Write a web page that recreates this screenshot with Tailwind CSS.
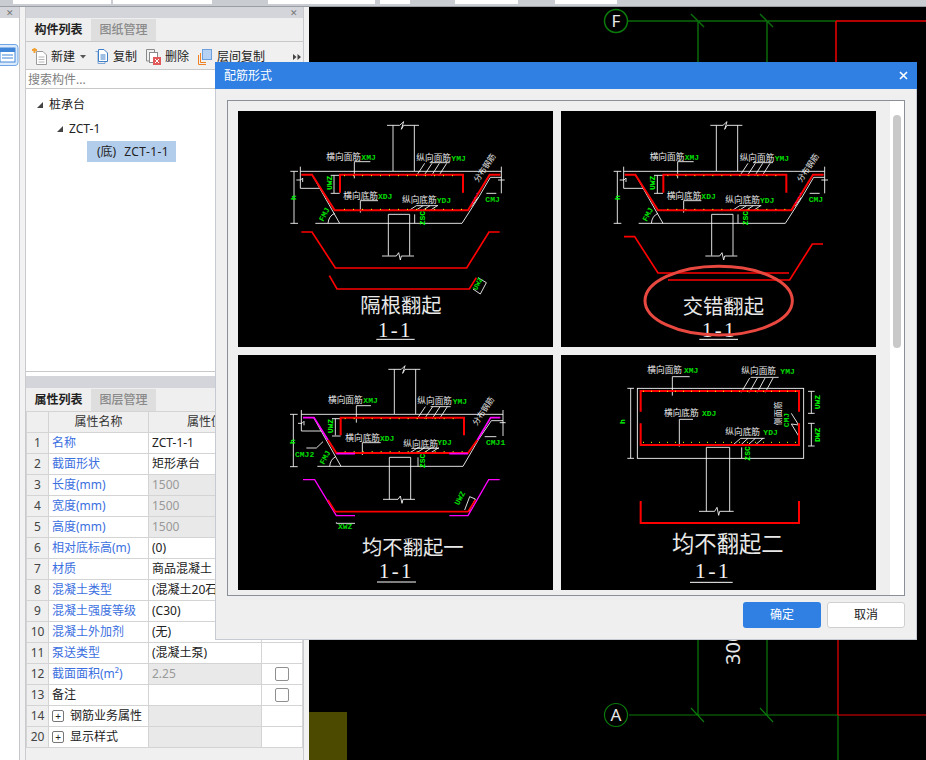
<!DOCTYPE html>
<html lang="zh-CN">

<head>
    <meta charset="UTF-8" />
    <title>配筋形式</title>
    <script src="https://cdn.jsdelivr.net/npm/@tailwindcss/browser@4"></script>
</head>

<body class="bg-white">
    <div class="relative w-[926px] h-[760px] overflow-hidden flex flex-col text-[12px] text-[#222] font-['Noto_Sans','Noto_Sans_CJK_SC',sans-serif]">

        <!-- top toolbar remnants -->
        <div class="h-[7px] shrink-0 bg-[#c9ccd1] border-b border-[#9a9da3] flex items-start">
            <div class="w-[13px]"></div>
            <div class="w-[98px] h-[4px] bg-white"></div>
            <div class="w-[2px]"></div>
            <div class="w-[99px] h-[4px] bg-white"></div>
            <div class="w-[56px]"></div>
            <div class="w-[107px] h-[4px] bg-white"></div>
            <div class="w-[5px]"></div>
            <div class="w-[30px] h-[4px] bg-white"></div>
            <div class="w-[45px]"></div>
            <div class="w-[63px] h-[4px] bg-white"></div>
            <div class="w-[37px]"></div>
            <div class="w-[62px] h-[4px] bg-white"></div>
        </div>

        <div class="flex flex-1 min-h-0">
            <!-- collapsed left panel -->
            <div class="w-[20px] shrink-0 border-r border-[#c4c6ca] bg-white flex flex-col">
                <div class="h-[11px] bg-[#d3d5da] flex items-center justify-end pr-[5px] text-[#777] text-[9px] leading-none">✕</div>
                <div class="pt-[26px]">
                    <svg width="19" height="23" viewBox="0 0 19 23">
                        <rect x="-4" y="0.5" width="22" height="21" rx="3" fill="#dcebfb" stroke="#6ea5e6" />
                        <rect x="0" y="4" width="15" height="14" fill="#fff" stroke="#3f86d8" />
                        <rect x="0" y="4" width="15" height="4" fill="#3f86d8" />
                        <path d="M2 11H13M2 14H13" stroke="#3f86d8" />
                    </svg>
                </div>
            </div>
            <div class="w-[5px] shrink-0 bg-[#f2f2f2]"></div>

            <!-- component panels -->
            <div class="w-[279px] shrink-0 flex flex-col border-x border-[#c8cacd] bg-white">
                <div class="h-[11px] shrink-0 bg-[#d3d5da] flex items-center justify-end pr-[5px] text-[#777] text-[9px] leading-none">✕</div>
                <div class="h-[24px] shrink-0 bg-[#efefef] flex items-stretch border-b border-[#c8c8c8] pt-[1px]">
                    <div class="w-[65px] flex items-center justify-center font-bold">构件列表</div>
                    <div class="w-[65px] flex items-center justify-center bg-[#dedede] text-[#8a8a8a] font-medium">图纸管理</div>
                </div>
                <div class="h-[28px] shrink-0 bg-[#f0f0f0] border-b border-[#c8c8c8] flex items-center pt-[2px]">
                    <svg class="ml-[6px]" width="16" height="17" viewBox="0 0 16 17">
                        <path d="M4.5 3.5H11L14.5 7V16.5H4.5Z" fill="#fff" stroke="#9a9a9a" />
                        <path d="M6.5 9H12.5M6.5 11.5H12.5M6.5 14H12.5" stroke="#b5b5b5" />
                        <path d="M0 2H5M2.5 0V5" stroke="#f0a030" stroke-width="2" />
                    </svg>
                    <span class="ml-[3px]">新建</span>
                    <svg class="ml-[5px]" width="6" height="4" viewBox="0 0 6 4"><path d="M0 0H6L3 3.5Z" fill="#555" /></svg>
                    <svg class="ml-[9px]" width="13" height="15" viewBox="0 0 13 15">
                        <path d="M0.5 2.5H3V14.5H10V12.5" fill="none" stroke="#7fa6d6" />
                        <path d="M3.5 0.5H9L12.5 4V12.5H3.5Z" fill="#fff" stroke="#3f7fc8" />
                        <path d="M5.5 6H10.5M5.5 8H10.5M5.5 10H10.5" stroke="#3f7fc8" />
                    </svg>
                    <span class="ml-[5px]">复制</span>
                    <svg class="ml-[9px]" width="15" height="16" viewBox="0 0 15 16">
                        <path d="M0.5 0.5H8.5V3M0.5 0.5V12H3" fill="none" stroke="#8a8a8a" />
                        <rect x="3.5" y="3.5" width="8" height="10" fill="#fff" stroke="#8a8a8a" />
                        <rect x="7" y="8" width="8" height="8" fill="#e05a5a" />
                        <path d="M9 10L13 14M13 10L9 14" stroke="#fff" />
                    </svg>
                    <span class="ml-[4px]">删除</span>
                    <svg class="ml-[9px]" width="14" height="16" viewBox="0 0 14 16">
                        <path d="M0.5 6V15.5H8" fill="none" stroke="#f08020" />
                        <path d="M2.5 4V13.5H8" fill="none" stroke="#f08020" />
                        <rect x="4.5" y="0.5" width="9" height="10" fill="#b5d2f5" stroke="#6ea0dc" />
                    </svg>
                    <span class="ml-[5px]">层间复制</span>
                    <svg class="ml-auto mr-[2px]" width="8" height="6" viewBox="0 0 8 6"><path d="M0 0L3.5 3L0 6ZM4.5 0L8 3L4.5 6Z" fill="#444" /></svg>
                </div>
                <div class="h-[19px] shrink-0 border-b border-[#c8c8c8] px-[2px] flex items-center text-[#808080] pt-[2px]">搜索构件...</div>
                <div class="h-[282px] shrink-0 pt-[3px] text-[#222]">
                    <div class="h-[24px] pl-[11px] flex items-center gap-[6px] pt-[1px]">
                        <svg width="6" height="6" viewBox="0 0 6 6"><path d="M6 0V6H0Z" fill="#444" /></svg>
                        <span>桩承台</span>
                    </div>
                    <div class="h-[24px] pl-[31px] flex items-center gap-[6px] pt-[1px]">
                        <svg width="6" height="6" viewBox="0 0 6 6"><path d="M6 0V6H0Z" fill="#444" /></svg>
                        <span>ZCT-1</span>
                    </div>
                    <div class="h-[21px] w-[89px] mt-[1px] ml-[61px] pl-[10px] bg-[#b2cdec] flex items-center"><span>(底)</span><span class="ml-[8px] tracking-[0.4px]">ZCT-1-1</span></div>
                </div>
                <div class="h-[5px] shrink-0 bg-white border-t border-[#c8c8c8]"></div>
                <div class="h-[12px] shrink-0 bg-[#d3d5da]"></div>
                <div class="h-[23px] shrink-0 bg-[#efefef] flex items-stretch pt-[1px]">
                    <div class="w-[65px] flex items-center justify-center font-bold">属性列表</div>
                    <div class="w-[65px] flex items-center justify-center bg-[#dedede] text-[#8a8a8a] font-medium">图层管理</div>
                </div>
                <table class="table-fixed border-collapse w-[277px] shrink-0 [&_td]:border [&_td]:border-[#d4d4d4] [&_td]:h-[21px] [&_td]:p-0 [&_th]:border [&_th]:border-[#d4d4d4] [&_th]:font-normal">
                    <colgroup>
                        <col class="w-[22px]" />
                        <col class="w-[100px]" />
                        <col class="w-[113px]" />
                        <col class="w-[41px]" />
                    </colgroup>
                    <thead>
                        <tr class="h-[21px] bg-[#efefef] text-[#333]">
                            <th></th>
                            <th>属性名称</th>
                            <th class="text-center">属性值</th>
                            <th>附加</th>
                        </tr>
                    </thead>
                    <tbody class="[&_td:first-child]:bg-[#efefef] [&_td:first-child]:text-center [&_td:first-child]:text-[#444] [&_td:nth-child(2)]:pl-[3px] [&_td:nth-child(3)]:pl-[3px]">
                        <tr><td>1</td><td class="text-[#3b6fe0]">名称</td><td>ZCT-1-1</td><td></td></tr>
                        <tr><td>2</td><td class="text-[#3b6fe0]">截面形状</td><td>矩形承台</td><td></td></tr>
                        <tr><td>3</td><td class="text-[#3b6fe0]">长度(mm)</td><td class="bg-[#e9e9e9] text-[#999]">1500</td><td></td></tr>
                        <tr><td>4</td><td class="text-[#3b6fe0]">宽度(mm)</td><td class="bg-[#e9e9e9] text-[#999]">1500</td><td></td></tr>
                        <tr><td>5</td><td class="text-[#3b6fe0]">高度(mm)</td><td class="bg-[#e9e9e9] text-[#999]">1500</td><td></td></tr>
                        <tr><td>6</td><td class="text-[#3b6fe0]">相对底标高(m)</td><td>(0)</td><td></td></tr>
                        <tr><td>7</td><td class="text-[#3b6fe0]">材质</td><td>商品混凝土</td><td></td></tr>
                        <tr><td>8</td><td class="text-[#3b6fe0]">混凝土类型</td><td class="whitespace-nowrap overflow-hidden">(混凝土20石)</td><td></td></tr>
                        <tr><td>9</td><td class="text-[#3b6fe0]">混凝土强度等级</td><td>(C30)</td><td></td></tr>
                        <tr><td>10</td><td class="text-[#3b6fe0]">混凝土外加剂</td><td>(无)</td><td></td></tr>
                        <tr><td>11</td><td class="text-[#3b6fe0]">泵送类型</td><td>(混凝土泵)</td><td></td></tr>
                        <tr>
                            <td>12</td><td class="text-[#3b6fe0]">截面面积(m²)</td><td class="bg-[#e9e9e9] text-[#999]">2.25</td>
                            <td><div class="w-[14px] h-[14px] mx-auto rounded-[2px] border border-[#8f8f8f] bg-white"></div></td>
                        </tr>
                        <tr>
                            <td>13</td><td>备注</td><td></td>
                            <td><div class="w-[14px] h-[14px] mx-auto rounded-[2px] border border-[#8f8f8f] bg-white"></div></td>
                        </tr>
                        <tr>
                            <td>14</td>
                            <td><div class="flex items-center gap-[6px]"><span class="w-[12px] h-[12px] rounded-[2px] border border-[#777] flex items-center justify-center text-[10px] leading-none">+</span>钢筋业务属性</div></td>
                            <td class="bg-[#e9e9e9]"></td><td></td>
                        </tr>
                        <tr>
                            <td>20</td>
                            <td><div class="flex items-center gap-[6px]"><span class="w-[12px] h-[12px] rounded-[2px] border border-[#777] flex items-center justify-center text-[10px] leading-none">+</span>显示样式</div></td>
                            <td class="bg-[#e9e9e9]"></td><td></td>
                        </tr>
                    </tbody>
                </table>
                <div class="flex-1 bg-[#f0f0f0]"></div>
            </div>
            <div class="w-[5px] shrink-0 bg-[#f2f2f2]"></div>

            <!-- drawing canvas -->
            <div class="flex-1 bg-black">
                <svg class="block" width="617" height="753" viewBox="309 7 617 753" fill="none">
                    <rect x="309" y="712" width="38" height="48" fill="#4b4a00" />
                    <path d="M628 21H836M698 21V640M767 21V640M691 14L704 27M760 14L773 27" stroke="#0a6a0a" stroke-width="1.5" />
                    <path d="M836 21H926M836 21V640" stroke="#f00000" stroke-width="1.5" />
                    <circle cx="616" cy="21" r="11.5" stroke="#0a7a0a" stroke-width="1.5" />
                    <text x="616" y="27" text-anchor="middle" font-size="17" fill="#e8e8e8">F</text>
                    <path d="M629 715H838M698 640V715M767 640V715M838 715V760M691 708L704 722M760 708L773 722" stroke="#0a7a0a" stroke-width="1.2" />
                    <path d="M838 715H926" stroke="#f00000" stroke-width="1.2" />
                    <path d="M838 640V715" stroke="#f00000" stroke-width="1.2" />
                    <circle cx="616" cy="715" r="11.5" stroke="#0a7a0a" stroke-width="1.2" />
                    <text x="616" y="721" text-anchor="middle" font-size="17" fill="#e8e8e8">A</text>
                    <text transform="translate(740 665) rotate(-90)" font-size="20" fill="#e8e8e8">3000</text>
                </svg>
            </div>
        </div>

        <!-- shared drawing for the two raised foundations -->
        <svg class="absolute w-0 h-0">
            <defs>
                <g id="zct-top">
                    <path fill="none" stroke="#fff" stroke-width="2.6" d="M465 183V46M529 183V46M447 46H485L497 35L490 58L497 46H543M187 184H790M168 184V340M157 184H180M157 340H180M187 170V235H248M175 210H188L194 204V216M222 194L305 340M232 340H672L720 265M757 202L720 265M757 202H790M790 170V250M745 250H775M780 210H800M288 196V250M278 196H305M278 250H305M451 437V313H515V437M432 438H475L482 428L487 450L490 438H528M270 340Q272 318 290 310M530 313V340M349 205V155H397M367 308V272H420M575 158H635M535 198L560 160M557 198L582 160M580 198L604 160M602 198L626 160M535 287H600M512 302L535 287M532 302L555 287M553 302L576 287M575 302L598 287M700 290L720 262" />
                    <path fill="none" stroke="#ff0000" stroke-width="6" d="M190 194H222L290 301H690L755 194H787M306 248V194H675V248" />
                    <path fill="none" stroke="#ffff00" stroke-width="3" stroke-dasharray="3 24" d="M318 197H665M318 298H680" />
                    <path fill="none" stroke="#ff00ff" stroke-width="3" stroke-dasharray="3 12" d="M703 278L722 240" />
                    <g font-size="26" fill="#e8e8e8">
                        <text x="265" y="150">横向面筋</text>
                        <text x="535" y="152">纵向面筋</text>
                        <text x="316" y="266">横向底筋</text>
                        <text x="492" y="278">纵向底筋</text>
                    </g>
                    <text transform="translate(720 218) rotate(-56)" font-size="24" fill="#e8e8e8">分布钢筋</text>
                    <g font-size="24" font-weight="700" fill="#00dc00" font-family="Liberation Mono">
                        <text x="370" y="150">XMJ</text>
                        <text x="640" y="153">YMJ</text>
                        <text x="420" y="267">XDJ</text>
                        <text x="596" y="279">YDJ</text>
                        <text x="742" y="276">CMJ</text>
                        <text transform="translate(256 336) rotate(-62)">FMJ</text>
                        <text transform="translate(281 240) rotate(-90)" fill="#00ff00">UWZ</text>
                        <text transform="translate(175 270) rotate(-90)" fill="#00ff00">h</text>
                        <text transform="translate(561 346) rotate(-90)" fill="#00ff00">ZSC</text>
                    </g>
                </g>
            </defs>
        </svg>

        <!-- dialog -->
        <div class="absolute left-[215px] top-[62px] w-[702px] h-[578px] bg-[#efefef] border border-[#c6cad3] border-t-0 flex flex-col">
            <div class="h-[27px] shrink-0 bg-[#2f80e2] -mx-px flex items-center justify-between pl-[9px] pr-[9px] text-white">
                <span class="text-[12px]">配筋形式</span>
                <svg width="9" height="9" viewBox="0 0 9 9"><path d="M1 1L8 8M8 1L1 8" stroke="#fff" stroke-width="1.6" /></svg>
            </div>
            <div class="mt-[11px] ml-[11px] w-[678px] h-[496px] border border-[#8b8f98] flex overflow-hidden">
                <div class="w-[662px] h-[494px] pl-[10px] pt-[10px] overflow-hidden">
                    <div class="grid grid-cols-[315px_315px] grid-rows-[236px_235px] gap-x-[8px] gap-y-[8px]">

                        <!-- 隔根翻起 -->
                        <svg class="block bg-black" width="315" height="236" viewBox="0 3 945 708" fill="none">
                            <use href="#zct-top" />
                            <path stroke="#ff0000" stroke-width="5" d="M190 366H222L292 474H686L753 366H785M274 497L297 537H694L715 503" />
                            <path stroke="#fff" stroke-width="2.6" d="M720 503L745 518L727 552L705 537" />
                            <text transform="translate(716 542) rotate(-62)" font-size="22" font-weight="700" fill="#00dc00" font-family="Liberation Mono">UWZ</text>
                            <text x="367" y="610" font-size="61" fill="#e8e8e8">隔根翻起</text>
                            <text x="472" y="680" text-anchor="middle" font-size="62" letter-spacing="7" fill="#f2f2f2" font-family="Liberation Serif">1-1</text>
                            <path stroke="#fff" stroke-width="3" d="M415 688H530" />
                        </svg>

                        <!-- 交错翻起 -->
                        <svg class="block bg-black" width="315" height="236" viewBox="9 3 945 708" fill="none">
                            <use href="#zct-top" transform="translate(10 0)" />
                            <path stroke="#ff0000" stroke-width="5" d="M198 380H230L300 489H693M330 510H695L763 402H795" />
                            <text x="374" y="612" font-size="61" fill="#e8e8e8">交错翻起</text>
                            <text x="484" y="680" text-anchor="middle" font-size="62" letter-spacing="7" fill="#f2f2f2" font-family="Liberation Serif">1-1</text>
                            <path stroke="#fff" stroke-width="3" d="M424 688H540" />
                            <ellipse cx="482" cy="572" rx="221" ry="103" stroke="#e8483f" stroke-width="9" />
                        </svg>

                        <!-- 均不翻起一 -->
                        <svg class="block bg-black" width="315" height="235" viewBox="0 15 945 705" fill="none">
                            <path stroke="#fff" stroke-width="2.6" d="M469 192V58M533 192V58M451 58H490L501 47L494 70L501 58H547M190 193H795M166 193V350M156 193H179M156 350H179M190 180V243H250M180 220H192L198 214V226M227 203L309 349M238 349H675L722 268M760 212L722 268M760 212H795M795 180V258M740 260H775M785 218H803M292 206V256M282 206H308M282 258H308M454 448V322H518V448M435 448H480L487 438L492 460L495 448H531M275 349Q277 328 293 320M540 322V350M355 218V167H399M373 315V278H428M578 170H638M537 207L562 170M559 207L584 170M582 207L606 170M604 207L628 170M520 295H603M516 308L540 293M537 308L560 293M558 308L581 293M579 308L602 293M205 294H235L255 275M295 517V520H351M680 480L695 440L712 447L692 486" />
                            <path stroke="#ff0000" stroke-width="6" d="M270 270L295 309H690L718 270M308 256V203H678V256" />
                            <path stroke="#ff00ff" stroke-width="5" d="M195 203H228L270 270M718 270L758 203H787M295 311H351M634 311H690" />
                            <path stroke="#ffff00" stroke-width="3" stroke-dasharray="3 24" d="M320 206H668M320 305H680" />
                            <path stroke="#ff00ff" stroke-width="4" d="M195 389H230L295 497H351M634 497H690L752 389H785" />
                            <path stroke="#ff0000" stroke-width="5" d="M270 450L292 485H690L712 450" />
                            <g font-size="26" fill="#e8e8e8">
                                <text x="270" y="158">横向面筋</text>
                                <text x="538" y="161">纵向面筋</text>
                                <text x="322" y="274">横向底筋</text>
                                <text x="496" y="290">纵向底筋</text>
                            </g>
                            <text transform="translate(716 228) rotate(-56)" font-size="24" fill="#e8e8e8">分布钢筋</text>
                            <g font-size="24" font-weight="700" fill="#00dc00" font-family="Liberation Mono">
                                <text x="376" y="159">XMJ</text>
                                <text x="644" y="161">YMJ</text>
                                <text x="426" y="273">XDJ</text>
                                <text x="598" y="285">YDJ</text>
                                <text x="744" y="285">CMJ1</text>
                                <text x="171" y="320">CMJ2</text>
                                <text x="300" y="536">XWZ</text>
                                <text transform="translate(258 345) rotate(-62)">FMJ</text>
                                <text transform="translate(285 250) rotate(-90)" fill="#00ff00">UWZ</text>
                                <text transform="translate(172 282) rotate(-90)" fill="#00ff00">h</text>
                                <text transform="translate(562 354) rotate(-90)" fill="#00ff00">ZSC</text>
                                <text transform="translate(662 467) rotate(-62)">UWZ</text>
                            </g>
                            <text x="372" y="615" font-size="61" fill="#e8e8e8">均不翻起一</text>
                            <text x="475" y="684" text-anchor="middle" font-size="62" letter-spacing="7" fill="#f2f2f2" font-family="Liberation Serif">1-1</text>
                            <path stroke="#fff" stroke-width="3" d="M417 696H534" />
                        </svg>

                        <!-- 均不翻起二 -->
                        <svg class="block bg-black" width="315" height="235" viewBox="9 15 945 705" fill="none">
                            <rect x="238" y="115" width="499" height="210" stroke="#fff" stroke-width="2.6" />
                            <path stroke="#fff" stroke-width="2.6" d="M218 115V325M208 115H228M208 325H228M760 124V190M750 124H770M750 190H770M760 220V288M750 220H770M750 288H770M445 484V292H515V484M423 484H470L477 472L482 496L485 484H527M343 137V80H395M364 290V208H405M578 82H662M550 127L575 84M574 127L598 84M598 127L621 84M622 127L645 84M527 283L548 265M548 265H620M550 283L570 265M572 283L592 265M594 283L615 265M551 292V325M700 190L722 225L700 222L722 258" />
                            <path stroke="#ff0000" stroke-width="6" d="M248 185V123H723V185M248 220V285H723V220M248 453V519H723V453" />
                            <path stroke="#ffff00" stroke-width="3" stroke-dasharray="3 21" d="M255 124H720M255 277H720" />
                            <g font-size="26" fill="#e8e8e8">
                                <text x="268" y="68">横向面筋</text>
                                <text x="550" y="71">纵向面筋</text>
                                <text x="318" y="197">横向底筋</text>
                                <text x="502" y="254">纵向底筋</text>
                                <text transform="translate(668 226) rotate(-90)" font-size="24">侧面筋</text>
                            </g>
                            <g font-size="24" font-weight="700" fill="#00dc00" font-family="Liberation Mono">
                                <text x="378" y="69">XMJ</text>
                                <text x="667" y="72">YMJ</text>
                                <text x="432" y="198">XDJ</text>
                                <text x="616" y="255">YDJ</text>
                                <text transform="translate(692 232) rotate(-90)">CMJ</text>
                                <text transform="translate(785 178) rotate(-90)" fill="#00ff00">UWZ</text>
                                <text transform="translate(785 276) rotate(-90)" fill="#00ff00">DWZ</text>
                                <text transform="translate(200 222) rotate(-90)" fill="#00ff00">h</text>
                                <text transform="translate(577 332) rotate(-90)" fill="#00ff00">ZSC</text>
                            </g>
                            <text x="342" y="605" font-size="67" fill="#e8e8e8">均不翻起二</text>
                            <text x="465" y="684" text-anchor="middle" font-size="66" letter-spacing="7" fill="#f2f2f2" font-family="Liberation Serif">1-1</text>
                            <path stroke="#fff" stroke-width="3" d="M396 697H524" />
                        </svg>
                    </div>
                </div>
                <!-- scrollbar -->
                <div class="w-[14px] h-full bg-white pt-[14px] flex justify-center">
                    <div class="w-[8px] h-[233px] rounded-full bg-[#c9c9c9]"></div>
                </div>
            </div>
            <div class="flex justify-end gap-[6px] mt-[6px] pr-[11px]">
                <button class="w-[78px] h-[26px] rounded-[3px] bg-[#2f80e2] text-white">确定</button>
                <button class="w-[78px] h-[26px] rounded-[3px] bg-white border border-[#cfcfcf] text-[#222]">取消</button>
            </div>
        </div>
    </div>
</body>

</html>
